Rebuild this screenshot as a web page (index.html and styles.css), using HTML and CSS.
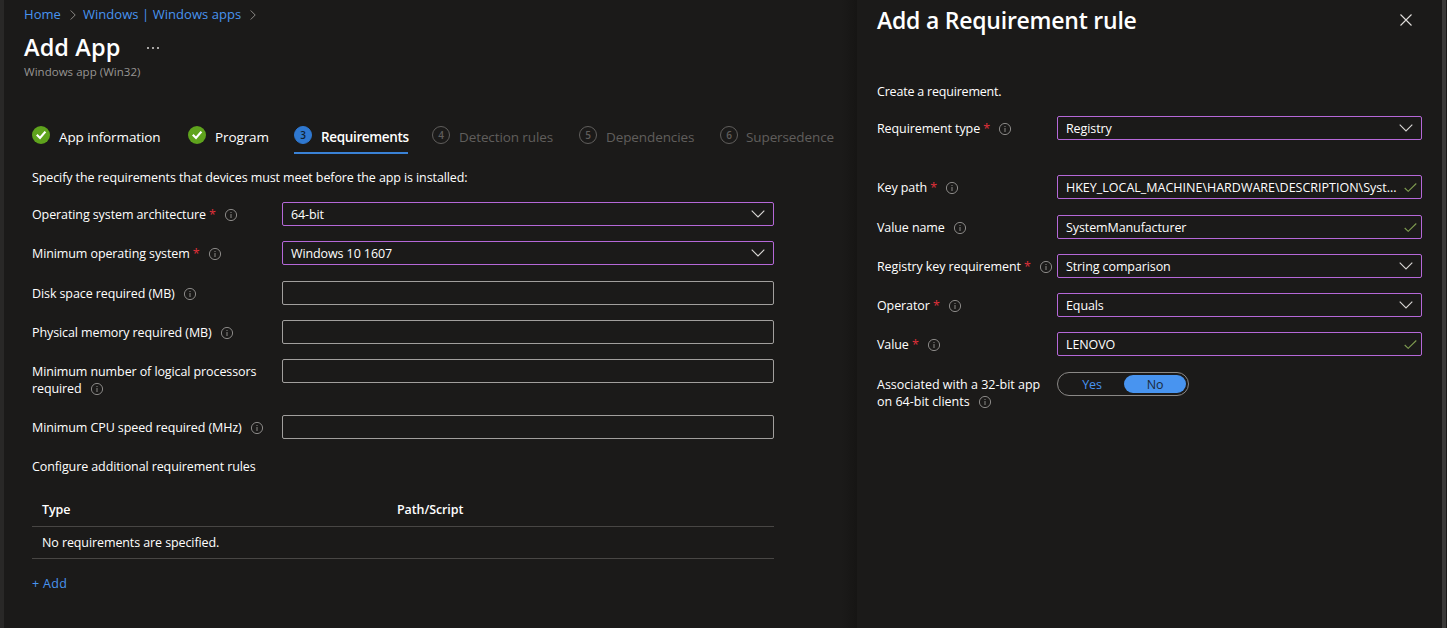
FILE: index.html
```html
<!DOCTYPE html>
<html lang="en">
<head>
<meta charset="utf-8">
<title>Add App</title>
<link rel="stylesheet" href="styles.css">
</head>
<body>
<svg class="defs" aria-hidden="true">
  <symbol id="info" viewBox="0 0 14 14"><circle cx="7" cy="7" r="5.6" fill="none" stroke="currentColor"/><path d="M7 6v4M7 4v1" stroke="currentColor" fill="none"/></symbol>
  <symbol id="down" viewBox="0 0 14 8"><path d="M.7.7 7 7 13.300.7" fill="none" stroke="currentColor" stroke-width="1.1"/></symbol>
  <symbol id="right" viewBox="0 0 6 10"><path d="M.7.5 5.200 5 .7 9.500" fill="none" stroke="currentColor"/></symbol>
  <symbol id="tick" viewBox="0 0 13 9"><path d="M.7 5 4.200 8.300 12.300.5" fill="none" stroke="currentColor" stroke-width="1.1"/></symbol>
  <symbol id="done" viewBox="0 0 18 18"><circle cx="9" cy="9" r="9" fill="#5fa31d"/><path d="M4.800 8.800 8 12 13.400 5.600" fill="none" stroke="#fff" stroke-width="2.200"/></symbol>
</svg>
<div class="shell">
  <main class="main">
    <nav class="crumbs"><a class="home">Home</a><svg><use href="#right"/></svg><a class="apps">Windows | Windows apps</a><svg><use href="#right"/></svg></nav>
    <div class="heading"><h1>Add App</h1><span class="more"><i></i><i></i><i></i></span></div>
    <p class="sub">Windows app (Win32)</p>
    <div class="tabs">
      <div class="tab t1"><svg class="mark"><use href="#done"/></svg><span>App information</span></div>
      <div class="tab t2"><svg class="mark"><use href="#done"/></svg><span>Program</span></div>
      <div class="tab t3 active"><b class="mark">3</b><span>Requirements</span></div>
      <div class="tab t4 off"><b class="mark">4</b><span>Detection rules</span></div>
      <div class="tab t5 off"><b class="mark">5</b><span>Dependencies</span></div>
      <div class="tab t6 off"><b class="mark">6</b><span>Supersedence</span></div>
    </div>
    <p class="intro">Specify the requirements that devices must meet before the app is installed:</p>
    <div class="form">
      <div class="row"><label>Operating system architecture <em>*</em><svg><use href="#info"/></svg></label><div class="field set">64-bit<svg class="down"><use href="#down"/></svg></div></div>
      <div class="row"><label>Minimum operating system <em>*</em><svg><use href="#info"/></svg></label><div class="field set">Windows 10 1607<svg class="down"><use href="#down"/></svg></div></div>
      <div class="row far"><label>Disk space required (MB)<svg><use href="#info"/></svg></label><div class="field"></div></div>
      <div class="row"><label>Physical memory required (MB)<svg><use href="#info"/></svg></label><div class="field"></div></div>
      <div class="row tall"><label>Minimum number of logical processors<br>required<svg><use href="#info"/></svg></label><div class="field"></div></div>
      <div class="row"><label>Minimum CPU speed required (MHz)<svg><use href="#info"/></svg></label><div class="field"></div></div>
    </div>
    <p class="config">Configure additional requirement rules</p>
    <div class="table">
      <div class="tr th"><span>Type</span><span>Path/Script</span></div>
      <div class="tr"><span>No requirements are specified.</span></div>
    </div>
    <a class="add">+ Add</a>
  </main>
  <aside class="panel">
    <header><h2>Add a Requirement rule</h2><svg class="close" viewBox="0 0 12 12"><path d="M.5.500 11.500 11.500M11.500.500.500 11.500" stroke="currentColor" stroke-width="1.100"/></svg></header>
    <p class="create">Create a requirement.</p>
    <div class="form">
      <div class="row"><label>Requirement type <em>*</em><svg><use href="#info"/></svg></label><div class="field set">Registry<svg class="down"><use href="#down"/></svg></div></div>
      <div class="row key"><label>Key path <em>*</em><svg><use href="#info"/></svg></label><div class="field set"><span class="path">HKEY_LOCAL_MACHINE\HARDWARE\DESCRIPTION\Syst...</span><svg class="tick"><use href="#tick"/></svg></div></div>
      <div class="row far"><label>Value name<svg><use href="#info"/></svg></label><div class="field set">SystemManufacturer<svg class="tick"><use href="#tick"/></svg></div></div>
      <div class="row"><label>Registry key requirement <em>*</em><svg><use href="#info"/></svg></label><div class="field set">String comparison<svg class="down"><use href="#down"/></svg></div></div>
      <div class="row"><label>Operator <em>*</em><svg><use href="#info"/></svg></label><div class="field set">Equals<svg class="down"><use href="#down"/></svg></div></div>
      <div class="row"><label>Value <em>*</em><svg><use href="#info"/></svg></label><div class="field set">LENOVO<svg class="tick"><use href="#tick"/></svg></div></div>
      <div class="row far"><label class="wide">Associated with a 32-bit app<br>on 64-bit clients<svg><use href="#info"/></svg></label><div class="toggle"><span>Yes</span><span class="on">No</span></div></div>
    </div>
  </aside>
</div>
</body>
</html>
```
FILE: styles.css
```css
* { box-sizing: border-box; }
body { margin: 0; background: #1b1a19; color: #fff; font: 12.5px/17px "Open Sans", "Noto Sans", sans-serif; letter-spacing: -.1px; height: 628px; overflow: hidden; }
p, h1, h2 { margin: 0; }
svg { flex: none; overflow: visible; }
.defs { display: none; }
.shell { display: grid; grid-template-columns: 853px 1fr; height: 628px; border-left: 4px solid #292827; border-right: 4px solid #3b3a39; width: 1446px; }
.main { padding: 5px 0 0 20px; display: flex; flex-direction: column; background: linear-gradient(to right, #1b1a19 838px, #161514 853px); }
.main > * { flex: none; }
.crumbs { display: flex; align-items: center; height: 19px; font-size: 13px; letter-spacing: .05px; color: #4894f0; }
.crumbs svg { width: 6px; height: 10px; color: #8a8886; margin: 0 7px 0 9px; }
.heading { display: flex; align-items: center; height: 32px; margin-top: 7px; }
h1, h2 { font-size: 23.5px; line-height: 32px; font-weight: 600; letter-spacing: .1px; }
h2 { font-size: 23px; letter-spacing: -.23px; margin-top: -1px; }
.more { display: flex; gap: 3px; margin: 2px 0 0 27px; }
.more i { width: 2px; height: 2px; background: #a8a6a4; }
.sub { font-size: 11.5px; line-height: 16px; letter-spacing: .03px; color: #979593; margin-top: 1px; }
.tabs { display: flex; height: 32px; margin: 42px 0 0 8px; font-size: 13.5px; letter-spacing: -.1px; }
.tab { display: flex; line-height: 31px; height: 32px; white-space: nowrap; }
.mark { width: 18px; height: 18px; margin: 4px 9px 0 0; flex: none; }
b.mark { border-radius: 50%; border: 1px solid #605e5c; font-size: 10px; line-height: 16px; text-align: center; font-weight: 600; letter-spacing: 0; }
.t1 { width: 156px; } .t2 { width: 106px; } .t3 { width: 114px; margin-right: 24px; }
.t4 { width: 147px; } .t5 { width: 141px; }
.t6 .mark { margin-right: 8px; }
.off { color: #605e5c; }
.active { font-weight: 600; letter-spacing: -.35px; border-bottom: 2px solid #3a82d6; }
.active b.mark { background: #2f78d0; border-color: #2f78d0; color: #10202f; }
.intro { margin: 15px 0 0 8px; }
.form { display: flex; flex-direction: column; gap: 15px; }
.row { display: grid; grid-template-columns: 250px 492px; align-items: start; }
.main .form { margin: 16px 0 0 8px; }
.far { margin-top: 1px; }
.tall { min-height: 41px; }
label { padding-top: 4px; white-space: nowrap; min-height: 24px; }
label svg { width: 14px; height: 14px; color: #8a8886; vertical-align: -3px; margin: -2px 0 0 8px; }
.wide { letter-spacing: 0; }
em { color: #e0303a; font-style: normal; }
.field { height: 24px; border: 1px solid #a19f9d; border-radius: 2px; padding: 0 8px; display: flex; align-items: center; justify-content: space-between; white-space: nowrap; }
.set { border-color: #b568d8; }
.path { letter-spacing: 0; }
.down { width: 14px; height: 8px; color: #d8d6d4; }
.tick { width: 13px; height: 9px; color: #7f9c50; margin-right: -4px; }
.config { margin: 19px 0 0 8px; }
.table { margin: 18px 0 0 8px; width: 742px; }
.tr { display: grid; grid-template-columns: 355px 1fr; height: 32px; line-height: 32px; padding-left: 10px; border-bottom: 1px solid #484644; }
.th { height: 34px; line-height: 34px; font-weight: 600; }
.add { color: #4894f0; letter-spacing: .3px; margin: 16px 0 0 8px; }
.panel { padding: 4px 0 0 20px; }
header { display: flex; justify-content: space-between; align-items: center; padding-right: 30px; height: 32px; }
.close { width: 12px; height: 12px; color: #e0dedc; }
.create { margin-top: 47px; letter-spacing: -.2px; }
.panel .form { margin-top: 16px; }
.panel .row { grid-template-columns: 180px 365px; }
.key { margin-top: 20px; }
.toggle { width: 132px; height: 24px; border: 1px solid #8a8886; border-radius: 12px; padding: 2px; display: grid; grid-template-columns: 64px 62px; color: #4894f0; text-align: center; line-height: 19px; }
.on { background: #4894f0; color: #1b2a3a; border-radius: 9px; height: 18px; }
```
